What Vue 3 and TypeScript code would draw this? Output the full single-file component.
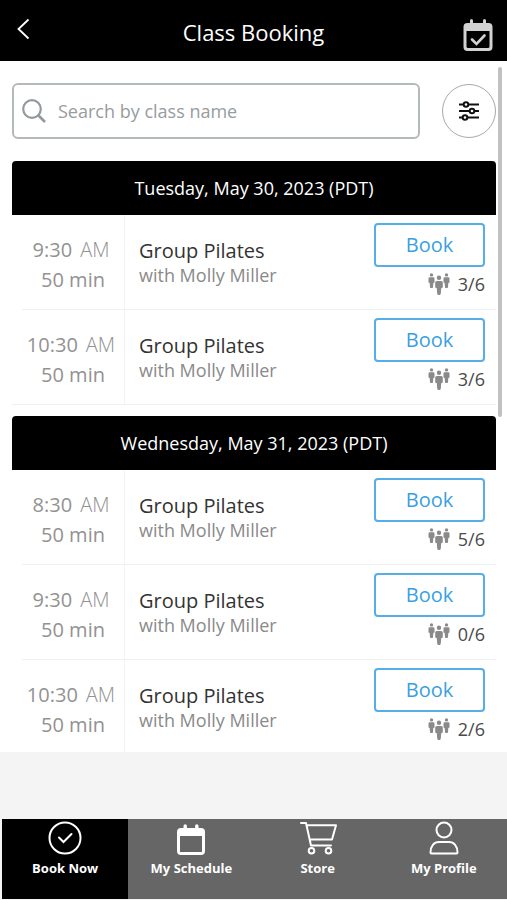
<script setup lang="ts">
import { ref } from 'vue'

interface ClassSlot {
  id: number
  time: string
  period: string
  duration: string
  name: string
  teacher: string
  spots: string
}

interface Day {
  label: string
  slots: ClassSlot[]
}

const query = ref('')
const active = ref('book')

const slot = (id: number, time: string, spots: string): ClassSlot => ({
  id,
  time,
  period: 'AM',
  duration: '50 min',
  name: 'Group Pilates',
  teacher: 'with Molly Miller',
  spots,
})

const days: Day[] = [
  { label: 'Tuesday, May 30, 2023 (PDT)', slots: [slot(1, '9:30', '3/6'), slot(2, '10:30', '3/6')] },
  {
    label: 'Wednesday, May 31, 2023 (PDT)',
    slots: [slot(3, '8:30', '5/6'), slot(4, '9:30', '0/6'), slot(5, '10:30', '2/6')],
  },
]

const tabs = [
  { id: 'book', label: 'Book Now' },
  { id: 'schedule', label: 'My Schedule' },
  { id: 'store', label: 'Store' },
  { id: 'profile', label: 'My Profile' },
]
</script>

<template>
  <div class="app">
    <header class="topbar">
      <button class="icon-button" type="button" aria-label="Back">
        <svg width="14" height="22" viewBox="0 0 14 22" fill="none" stroke="#fff" stroke-width="1.800">
          <path d="M12.500 1.500 2.500 11l10 9.500" />
        </svg>
      </button>
      <h1>Class Booking</h1>
      <button class="icon-button calendar" type="button" aria-label="My bookings">
        <svg width="30" height="34" viewBox="0 0 30 34">
          <path
            fill="#d2d2d2"
            fill-rule="evenodd"
            d="M7 2.500a1.500 1.500 0 0 1 3 0V5h10V2.500a1.500 1.500 0 0 1 3 0V5h2.500A4 4 0 0 1 29.500 9v20a4 4 0 0 1-4 4h-21a4 4 0 0 1-4-4V9a4 4 0 0 1 4-4H7zM3.500 13v15.500a1.500 1.500 0 0 0 1.500 1.500h20a1.500 1.500 0 0 0 1.500-1.500V13z"
          />
          <path d="m9 21.500 4.500 4.500 8-8.500" fill="none" stroke="#d2d2d2" stroke-width="2.600" stroke-linecap="round" />
        </svg>
      </button>
    </header>

    <div class="body">
      <main class="scroller">
        <form class="tools" role="search" @submit.prevent>
          <label class="search">
            <svg width="24" height="24" viewBox="0 0 24 24" fill="none" stroke="#929a9d" stroke-width="2.200">
              <circle cx="10" cy="10" r="8.800" />
              <path d="m16.500 16.500 6.500 6.500" stroke-width="2.600" />
            </svg>
            <input v-model="query" type="search" placeholder="Search by class name" aria-label="Search by class name" />
          </label>
          <button class="filter" type="button" aria-label="Filters">
            <svg width="22" height="20" viewBox="0 0 22 20" fill="none" stroke="#111" stroke-width="2">
              <path d="M1 3.500h4.500M10.500 3.500H21M1 10h10.500M16.500 10H21M1 16.500h3.500M9.500 16.500H21" />
              <circle cx="8" cy="3.500" r="2.300" />
              <circle cx="14" cy="10" r="2.300" />
              <circle cx="7" cy="16.500" r="2.300" />
            </svg>
          </button>
        </form>

        <section v-for="day in days" :key="day.label" class="day">
          <h2>{{ day.label }}</h2>
          <ul>
            <li v-for="item in day.slots" :key="item.id">
              <div class="when">
                <div class="time">{{ item.time }}<span>{{ item.period }}</span></div>
                <div>{{ item.duration }}</div>
              </div>
              <div class="what">
                <h3>{{ item.name }}</h3>
                <p>{{ item.teacher }}</p>
              </div>
              <div class="action">
                <button class="book" type="button">Book</button>
                <div class="spots">
                  <svg width="22" height="22" viewBox="0 0 22 22" fill="#8a8a8a">
                    <circle cx="3.500" cy="1.900" r="1.700" />
                    <path d="M1.800 4.200h3.400q1.300 0 1.300 1.300V9.500l-1.200.5-.3 4.200q0 .8-.8.8H2.800q-.8 0-.8-.8L1.700 10 .5 9.500v-4q0-1.300 1.300-1.300z" />
                    <circle cx="18.500" cy="1.900" r="1.700" />
                    <path d="M16.800 4.200h3.400q1.300 0 1.300 1.300V9.500l-1.200.5-.3 4.200q0 .8-.8.8h-1.400q-.8 0-.8-.8l-.3-4.200-1.200-.5v-4q0-1.300 1.300-1.300z" />
                    <circle cx="11" cy="4.800" r="2.200" />
                    <path d="M8.900 7.900h4.200q1.700 0 1.700 1.700v5l-1.600.7-.4 5.300q-.1 1.300-1.100 1.300h-1.400q-1 0-1.100-1.300l-.4-5.300-1.600-.7v-5q0-1.700 1.700-1.700z" />
                  </svg>
                  <span>{{ item.spots }}</span>
                </div>
              </div>
            </li>
          </ul>
        </section>
      </main>
      <div class="thumb" aria-hidden="true"></div>
    </div>

    <nav class="tabs">
      <button
        v-for="tab in tabs"
        :key="tab.id"
        type="button"
        :class="{ active: active === tab.id }"
        @click="active = tab.id"
      >
        <svg v-if="tab.id === 'book'" width="38" height="34" viewBox="0 0 38 34" fill="none" stroke="#fff" stroke-width="2">
          <circle cx="19" cy="17" r="15.500" />
          <path d="m13 16.500 4.500 4.500 8-8" stroke-linecap="round" />
        </svg>
        <svg v-else-if="tab.id === 'schedule'" width="38" height="34" viewBox="0 0 38 34" fill="#fff">
          <path
            fill-rule="evenodd"
            d="M11.500 5a1.700 1.700 0 0 1 3.400 0v2h8.200V5a1.700 1.700 0 0 1 3.400 0v2H29a4 4 0 0 1 4 4v19a4 4 0 0 1-4 4H9a4 4 0 0 1-4-4V11a4 4 0 0 1 4-4h2.500zM8 15v15.500q0 .5.500.5h21q.500 0 .500-.5V15z"
          />
        </svg>
        <svg v-else-if="tab.id === 'store'" width="38" height="34" viewBox="0 0 38 34" fill="none" stroke="#fff" stroke-width="2" stroke-linecap="round" stroke-linejoin="round">
          <path d="M2 2h5l5 22.500h20M7.600 4.200H37l-4 14.300H10.800" />
          <circle cx="12.500" cy="29.800" r="2.800" />
          <circle cx="29.500" cy="29.800" r="2.800" />
        </svg>
        <svg v-else width="38" height="34" viewBox="0 0 38 34" fill="none" stroke="#fff" stroke-width="2" stroke-linejoin="round">
          <circle cx="19" cy="9" r="7.500" />
          <path d="M5.500 31.500C5.500 25 9 21 14 21h10c5 0 8.500 4 8.500 10.500q0 1-1 1h-25q-1 0-1-1z" />
        </svg>
        <span>{{ tab.label }}</span>
      </button>
    </nav>
  </div>
</template>

<style>
body {
  background: #f4f4f4;
}
</style>

<style scoped>
.app {
  height: 100vh;
  display: flex;
  flex-direction: column;
  font-family: 'Open Sans', 'Noto Sans', sans-serif;
  color: #333;
}

button {
  padding: 0;
  border: 0;
  background: none;
  font: inherit;
  color: inherit;
  cursor: pointer;
}

svg {
  display: block;
  flex: none;
}

h1,
h2,
h3,
p,
ul {
  margin: 0;
  padding: 0;
  font-weight: 400;
}

.topbar {
  flex: none;
  height: 61px;
  display: grid;
  grid-template-columns: 48px 1fr 48px;
  align-items: center;
  background: #000;
  color: #fff;
}

.topbar h1 {
  padding-top: 2px;
  font-size: 22px;
  line-height: 32px;
  text-align: center;
}

.icon-button {
  display: flex;
  padding: 0 0 4px 16px;
}

.icon-button.calendar {
  padding: 8px 0 0 4px;
}

.body {
  position: relative;
  flex: 1;
  min-height: 0;
  margin-bottom: 67px;
  background: #fff;
}

.scroller {
  height: 100%;
  box-sizing: border-box;
  padding: 22px 11px 0 12px;
  overflow-y: auto;
  scrollbar-width: none;
}

.thumb {
  position: absolute;
  top: 6px;
  right: 5px;
  width: 4px;
  height: 350px;
  border-radius: 2px;
  background: #c1c1c1;
}

.tools {
  display: flex;
  align-items: center;
  gap: 22px;
  margin-bottom: 22px;
}

.search {
  flex: 1;
  min-width: 0;
  height: 56px;
  box-sizing: border-box;
  display: flex;
  align-items: center;
  gap: 12px;
  padding: 0 8px;
  border: 2px solid #b4b9bb;
  border-radius: 6px;
}

.search input {
  flex: 1;
  min-width: 0;
  padding: 0;
  border: 0;
  outline: 0;
  background: none;
  font: inherit;
  font-size: 18px;
  line-height: 24px;
  color: #333;
}

.search input::placeholder {
  color: #979c9f;
  opacity: 1;
}

.filter {
  width: 54px;
  height: 54px;
  display: flex;
  align-items: center;
  justify-content: center;
  border: 1px solid #a4a9ab;
  border-radius: 50%;
}

.day {
  margin-bottom: 11px;
}

.day h2 {
  border-radius: 4px 4px 0 0;
  background: #000;
  color: #fff;
  font-size: 18px;
  line-height: 54px;
  text-align: center;
}

.day ul {
  list-style: none;
}

.day li {
  display: flex;
  height: 95px;
  box-sizing: border-box;
  margin-left: 10px;
  border-bottom: 1px solid #eff1f1;
}

.day li:last-child {
  margin-left: 0;
  padding-left: 10px;
}

.when {
  flex: none;
  width: 103px;
  box-sizing: border-box;
  padding-top: 20px;
  border-right: 1px solid #f1f4f4;
  font-size: 20px;
  line-height: 30px;
  text-align: center;
  color: #929292;
}

.time {
  padding-right: 4px;
}

.time span {
  margin-left: 8px;
  font-weight: 300;
}

.what {
  flex: 1;
  min-width: 0;
  padding: 23px 0 0 14px;
}

.what h3 {
  font-size: 20px;
  line-height: 25px;
}

.what p {
  font-size: 18px;
  line-height: 25px;
  color: #8a8a8a;
}

.action {
  flex: none;
  width: 111px;
  padding: 8px 11px 0 0;
}

.book {
  display: block;
  width: 100%;
  height: 44px;
  border: 2px solid #56aee6;
  border-radius: 4px;
  font-size: 20px;
  line-height: 40px;
  color: #3a9fe0;
}

.spots {
  display: flex;
  align-items: center;
  justify-content: flex-end;
  gap: 8px;
  padding-top: 5px;
  font-size: 18px;
  line-height: 24px;
  color: #4a4a4a;
}

.tabs {
  flex: none;
  display: grid;
  grid-template-columns: repeat(4, 1fr);
  height: 80px;
  margin: 0 0 1px 2px;
  background: #666;
  color: #fff;
}

.tabs button {
  display: flex;
  flex-direction: column;
  align-items: center;
  gap: 3px;
  padding-top: 2px;
  font-size: 13px;
  font-weight: 700;
  line-height: 20px;
}

.tabs .active {
  background: #000;
}
</style>
